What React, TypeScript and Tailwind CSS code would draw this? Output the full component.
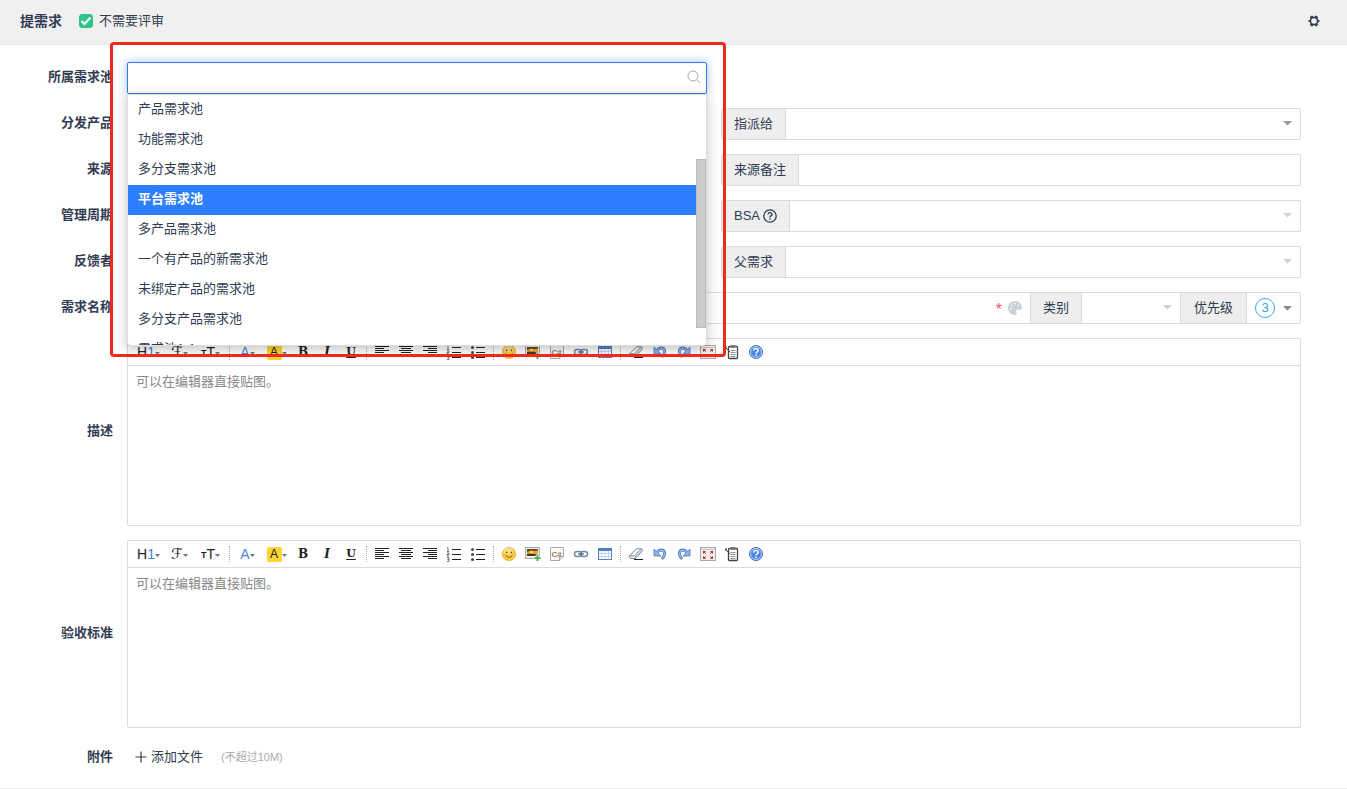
import { useState, type ReactNode } from 'react'
import { FaPalette } from 'react-icons/fa6'

const pools = [
  '产品需求池',
  '功能需求池',
  '多分支需求池',
  '平台需求池',
  '多产品需求池',
  '一个有产品的新需求池',
  '未绑定产品的需求池',
  '多分支产品需求池',
  '需求池1-1',
]

function Caret({ className }: { className: string }) {
  return (
    <svg className={className} width="9" height="5" viewBox="0 0 9 5" aria-hidden="true">
      <path d="M0 0h9L4.500 4.600z" fill="currentColor" />
    </svg>
  )
}

function SelectBox({ id, label, tone = 'light' }: { id: string; label: string; tone?: 'light' | 'dark' }) {
  return (
    <div className="relative h-full min-w-0 flex-1">
      <select id={id} aria-label={label} className="h-full w-full appearance-none bg-transparent px-2 outline-none">
        <option value=""></option>
      </select>
      <Caret
        className={
          tone === 'dark'
            ? 'pointer-events-none absolute top-3 right-2 text-[#999]'
            : 'pointer-events-none absolute top-3 right-2 text-[#cbd0db]'
        }
      />
    </div>
  )
}

function Addon({ htmlFor, children }: { htmlFor: string; children: ReactNode }) {
  return (
    <label htmlFor={htmlFor} className="flex h-full shrink-0 items-center border-r border-[#dcdcdc] bg-[#eee] px-3">
      {children}
    </label>
  )
}

function Box({ children }: { children: ReactNode }) {
  return <div className="flex h-8 min-w-0 items-center rounded-xs border border-[#dcdcdc] bg-white">{children}</div>
}

function Row({ label, htmlFor, children }: { label: string; htmlFor: string; children: ReactNode }) {
  return (
    <div className="flex items-center">
      <label htmlFor={htmlFor} className="w-[127px] shrink-0 pr-3.5 pb-0.5 text-right font-bold">
        {label}
      </label>
      <div className="min-w-0 flex-1">{children}</div>
    </div>
  )
}

function Pair({ children }: { children: ReactNode }) {
  return <div className="grid grid-cols-2 gap-3.5">{children}</div>
}

function Tool({ label, children }: { label: string; children: ReactNode }) {
  return (
    <button type="button" aria-label={label} title={label} className="flex h-6 w-6 items-center justify-center">
      {children}
    </button>
  )
}

function MenuTool({ label, narrow = false, children }: { label: string; narrow?: boolean; children: ReactNode }) {
  return (
    <button
      type="button"
      aria-label={label}
      title={label}
      className={narrow ? 'flex h-6 w-[29px] items-center justify-center' : 'flex h-6 w-[31px] items-center justify-center'}
    >
      {children}
      <svg width="5" height="3" viewBox="0 0 5 3" className="mt-0.5 text-[#777]" aria-hidden="true">
        <path d="M0 0h5L2.500 3z" fill="currentColor" />
      </svg>
    </button>
  )
}

function Divider() {
  return (
    <span className="flex w-[7px] justify-center">
      <span className="h-4 border-l border-dotted border-[#aaa]" />
    </span>
  )
}

function Lines({ rows }: { rows: [number, number][] }) {
  return (
    <svg width="16" height="16" viewBox="0 0 16 16" aria-hidden="true">
      {rows.map(([x, w], i) => (
        <rect key={i} x={x} y={2 + i * 2} width={w} height="1" fill="#222" />
      ))}
    </svg>
  )
}

function Undo({ flip = false }: { flip?: boolean }) {
  return (
    <svg width="16" height="16" viewBox="0 0 16 16" className={flip ? '-scale-x-100' : ''} aria-hidden="true">
      <path d="M4.500 7.500C7 2.500 12.600 3 12.600 7.500c0 2.500-1.300 4-2.800 5.300" fill="none" stroke="#4f78bb" strokeWidth="3" />
      <path d="M2 3v7h7z" fill="#8fb3ea" stroke="#4f78bb" strokeWidth=".8" strokeLinejoin="round" />
      <path d="M4.500 7.800C7 2.800 12.500 3.400 12.500 7.500c0 2.300-1.200 3.700-2.500 5" fill="none" stroke="#8fb3ea" strokeWidth="1.700" />
    </svg>
  )
}

function Toolbar() {
  return (
    <div className="flex h-[27px] items-center border-b border-[#dcdcdc] pl-[5px] text-[#222]">
      <MenuTool label="标题">
        <span className="text-[14px] leading-4">
          H<span className="text-[#3f7de0]">1</span>
        </span>
      </MenuTool>
      <MenuTool label="字体">
        <span className="font-['DejaVu_Serif','DejaVu_Sans',serif] text-[15px] leading-4">ℱ</span>
      </MenuTool>
      <MenuTool label="字号">
        <span className="pt-0.5 text-[9px] leading-4 font-bold">T</span>
        <span className="text-[14px] leading-4">T</span>
      </MenuTool>
      <Divider />
      <MenuTool label="文字颜色" narrow>
        <span className="text-[14px] leading-4 text-[#4f86e0]">A</span>
      </MenuTool>
      <MenuTool label="文字背景" narrow>
        <span className="h-[15px] w-[15px] rounded-xs bg-[#ffd434] text-center text-[12px] leading-[15px]">A</span>
      </MenuTool>
      <Tool label="粗体">
        <span className="font-['DejaVu_Serif',serif] text-[12px] leading-4 font-bold">B</span>
      </Tool>
      <Tool label="斜体">
        <span className="font-['DejaVu_Serif',serif] text-[12px] leading-4 font-bold italic">I</span>
      </Tool>
      <Tool label="下划线">
        <span className="font-['DejaVu_Serif',serif] text-[11px] leading-4 font-bold underline underline-offset-2">U</span>
      </Tool>
      <Divider />
      <Tool label="左对齐">
        <Lines rows={[[1, 14], [1, 9], [1, 14], [1, 9], [1, 14], [1, 9]]} />
      </Tool>
      <Tool label="居中">
        <Lines rows={[[1, 14], [3, 10], [1, 14], [3, 10], [1, 14], [3, 10]]} />
      </Tool>
      <Tool label="右对齐">
        <Lines rows={[[1, 14], [6, 9], [1, 14], [6, 9], [1, 14], [6, 9]]} />
      </Tool>
      <Tool label="编号">
        <svg width="16" height="16" viewBox="0 0 16 16" aria-hidden="true">
          <path d="M6 3.500h9M6 8.500h9M6 13.500h9" stroke="#222" />
          <path d="M1 2l1-.5v4M1 5.500h2M1 7h2v1.500H1V10h2M1 11.500h2v4H1M1.500 13.500H3" fill="none" stroke="#555" strokeWidth=".8" />
        </svg>
      </Tool>
      <Tool label="项目符号">
        <svg width="16" height="16" viewBox="0 0 16 16" aria-hidden="true">
          <path d="M6 3.500h9M6 8.500h9M6 13.500h9" stroke="#222" />
          <circle cx="2.500" cy="3.500" r="1.500" fill="#444" />
          <circle cx="2.500" cy="8.500" r="1.500" fill="#444" />
          <circle cx="2.500" cy="13.500" r="1.500" fill="#444" />
        </svg>
      </Tool>
      <Divider />
      <Tool label="表情">
        <svg width="16" height="16" viewBox="0 0 16 16" aria-hidden="true">
          <circle cx="8" cy="8" r="6.600" fill="#fbcb3f" stroke="#e3a92c" strokeWidth=".8" />
          <ellipse cx="7.500" cy="5" rx="4.500" ry="3" fill="#fff" opacity=".4" />
          <circle cx="5.700" cy="6.400" r=".8" fill="#6a4a12" />
          <circle cx="10.300" cy="6.400" r=".8" fill="#6a4a12" />
          <path d="M4.500 9.400q3.500 3.800 7 0" fill="none" stroke="#7c5517" strokeWidth=".9" />
        </svg>
      </Tool>
      <Tool label="图片">
        <svg width="16" height="16" viewBox="0 0 16 16" aria-hidden="true">
          <rect x=".5" y="1.500" width="14" height="11" fill="#eee" stroke="#aaa" />
          <rect x="2" y="3" width="11" height="7" fill="#f0a22b" />
          <path d="M2 3h11v1.500L9 5 6 4.500 2 6z" fill="#604a22" />
          <path d="M2 8l4-.5 7 1V10H2z" fill="#4a3619" />
          <circle cx="6.500" cy="6.300" r="1.200" fill="#ffe87a" />
          <path d="M12.500 8.500v7M9 12h7" stroke="#fff" strokeWidth="3.500" />
          <path d="M12.500 9v6M9.500 12h6" stroke="#4cae4c" strokeWidth="2" />
        </svg>
      </Tool>
      <Tool label="代码">
        <svg width="16" height="16" viewBox="0 0 16 16" aria-hidden="true">
          <path d="M1.500 1.500h13v9l-4 4h-9z" fill="#fafafa" stroke="#aaa" />
          <path d="M14.500 10.500h-4v4" fill="#ddd" stroke="#aaa" />
          <text x="2.500" y="10.500" fontSize="8" fontWeight="bold" fill="#9a754d">C#</text>
        </svg>
      </Tool>
      <Tool label="链接">
        <svg width="16" height="16" viewBox="0 0 16 16" aria-hidden="true">
          <rect x="1.500" y="5.500" width="7" height="5" rx="2.500" fill="none" stroke="#7489ac" strokeWidth="1.500" />
          <rect x="7.500" y="5.500" width="7" height="5" rx="2.500" fill="none" stroke="#7489ac" strokeWidth="1.500" />
          <path d="M5 8h6" stroke="#4c6591" strokeWidth="1.300" />
        </svg>
      </Tool>
      <Tool label="表格">
        <svg width="16" height="16" viewBox="0 0 16 16" aria-hidden="true">
          <rect x="1.500" y="2.500" width="13" height="11" fill="#fff" stroke="#5779b5" />
          <path d="M1 2h14v3H1z" fill="#527ec7" />
          <path d="M4.500 5v8.500M8 5v8.500M11.500 5v8.500M2 7.500h12.500M2 10.500h12.500" stroke="#b7cae8" strokeWidth=".8" />
        </svg>
      </Tool>
      <Divider />
      <Tool label="清除格式">
        <svg width="16" height="16" viewBox="0 0 16 16" aria-hidden="true">
          <path d="M1.500 9.800L8.500 2.800h4.600q1.400.2 1.200 2L7.500 12.500h-4.500q-2-.6-1.500-2.700z" fill="#f7f9fc" stroke="#6b7685" strokeWidth=".9" strokeLinejoin="round" />
          <path d="M1.500 9.800h4.700q1.500.7 1.300 2.700l6.800-7.700q0-1.800-1.200-2L6.200 9.800z" fill="#c9d3df" stroke="#8793a3" strokeWidth=".7" strokeLinejoin="round" />
          <path d="M6 13.500h9" stroke="#222" strokeWidth="1" />
        </svg>
      </Tool>
      <Tool label="撤销">
        <Undo />
      </Tool>
      <Tool label="重做">
        <Undo flip />
      </Tool>
      <Tool label="全屏">
        <svg width="16" height="16" viewBox="0 0 16 16" aria-hidden="true">
          <rect x=".5" y="1.500" width="15" height="13" fill="#f3eeee" stroke="#b3a6a6" />
          <path d="M1 3.500h14" stroke="#ccc4c4" />
          <path d="M3 5h3L3 8zM13 5h-3l3 3zM3 13h3l-3-3zM13 13h-3l3-3z" fill="#b9313a" />
          <path d="M4 6l2 1.500M12 6l-2 1.500M4 12l2-1.500M12 12l-2-1.500" stroke="#b9313a" />
        </svg>
      </Tool>
      <Tool label="粘贴">
        <svg width="16" height="16" viewBox="0 0 16 16" aria-hidden="true">
          <rect x="4.500" y="2.500" width="9" height="12" rx="1" fill="#fff" stroke="#444" strokeWidth="1.300" />
          <rect x="6.500" y="1" width="5" height="3" rx="1" fill="#777" />
          <path d="M6.500 6.500h5M6.500 8.500h5M6.500 10.500h5M6.500 12.500h5" stroke="#777" strokeWidth=".8" />
          <path d="M1 3l5 5M2 2v3" stroke="#444" />
        </svg>
      </Tool>
      <Tool label="帮助">
        <svg width="16" height="16" viewBox="0 0 16 16" aria-hidden="true">
          <circle cx="8" cy="8" r="6.500" fill="#4d86e8" stroke="#4570bc" />
          <circle cx="8" cy="8" r="5.500" fill="none" stroke="#d9e6fb" strokeWidth=".8" />
          <path d="M5.800 6.500q.2-2 2.200-2t2.200 1.800q0 1-1.200 1.700-.9.600-.9 1.400" fill="none" stroke="#fff" strokeWidth="1.500" />
          <rect x="7.300" y="10.500" width="1.500" height="1.500" fill="#fff" />
        </svg>
      </Tool>
    </div>
  )
}

function Editor({ id }: { id: string }) {
  return (
    <div className="rounded-xs border border-[#dcdcdc] bg-white">
      <Toolbar />
      <textarea
        id={id}
        placeholder="可以在编辑器直接贴图。"
        className="block h-[159px] w-full resize-none bg-transparent px-2 py-1.5 leading-5 outline-none placeholder:text-[#888]"
      />
    </div>
  )
}

function PoolPicker() {
  const [query, setQuery] = useState('')
  const [selected, setSelected] = useState('平台需求池')
  return (
    <div className="relative">
      <input
        id="pool"
        value={query}
        onChange={(e) => setQuery(e.target.value)}
        className="block h-8 w-full rounded-xs border border-[#3c78d8] bg-white pr-8 pl-2 shadow-[0_0_8px_rgba(46,127,255,0.5)] outline-none"
      />
      <svg className="pointer-events-none absolute top-2 right-1.5 text-[#aaa]" width="14" height="14" viewBox="0 0 14 14" aria-hidden="true">
        <circle cx="6" cy="6" r="5" fill="none" stroke="currentColor" />
        <path d="M9.800 9.800L13 13" stroke="currentColor" />
      </svg>
      <div className="absolute top-8 left-0 z-10 flex h-[252px] w-full overflow-hidden rounded-b-sm border border-[#ddd] bg-white shadow-[0_3px_12px_rgba(0,0,0,0.25)]">
        <ul role="listbox" aria-label="所属需求池" className="min-w-0 flex-1 overflow-hidden">
          {pools.map((pool) => (
            <li
              key={pool}
              role="option"
              aria-selected={pool === selected}
              onClick={() => setSelected(pool)}
              className={
                pool === selected
                  ? 'h-[30px] cursor-pointer bg-[#2e7fff] px-2.5 leading-7 font-bold text-white'
                  : 'h-[30px] cursor-pointer px-2.5 leading-7'
              }
            >
              {pool}
            </li>
          ))}
        </ul>
        <div className="w-2.5 shrink-0 pt-16">
          <div className="h-[169px] border border-[#bbb] bg-[#ccc]" />
        </div>
      </div>
      <div className="pointer-events-none absolute -top-5 -right-[19px] -left-[17px] z-20 h-[315px] rounded-sm border-3 border-[#ee2a20]" />
    </div>
  )
}

export default function App() {
  const [skipReview, setSkipReview] = useState(true)
  return (
    <div className="min-h-screen bg-white font-['Liberation_Sans','Noto_Sans_CJK_SC',sans-serif] text-[13px] leading-5 text-[#313c52]">
      <header className="flex h-[45px] items-center border-b border-[#e8e8e8] bg-[#f0f0f0] pr-[27px] pb-0.5 pl-5">
        <h1 className="text-[14px] font-bold">提需求</h1>
        <label className="ml-[17px] flex items-center gap-1.5">
          <span className="grid h-3.5 w-3.5">
            <input
              type="checkbox"
              checked={skipReview}
              onChange={(e) => setSkipReview(e.target.checked)}
              className="col-start-1 row-start-1 h-3.5 w-3.5 appearance-none rounded-[3px] border border-[#aaa] checked:border-[#2cc48a] checked:bg-[#2cc48a]"
            />
            <svg className="pointer-events-none col-start-1 row-start-1" width="14" height="14" viewBox="0 0 14 14" aria-hidden="true">
              {skipReview && <path d="M2.500 7l3 3 6-6.500" fill="none" stroke="#fff" strokeWidth="2.200" />}
            </svg>
          </span>
          不需要评审
        </label>
        <button type="button" aria-label="设置" className="ml-auto">
          <svg width="12" height="12" viewBox="0 0 12 12" aria-hidden="true">
            <path
              d="M3 .8h1.800l.6.900h1.200l.6-.9H9l1 1.700-.4 1 .7 1.500 1.300.3v1.400l-1.300.3-.7 1.500.4 1-1 1.700H7.200l-.6-.9H5.400l-.6.900H3L2 9.500l.4-1L1.700 7 .4 6.700V5.300L1.700 5l.7-1.500-.4-1zM6 3.200a2.800 2.800 0 1 0 0 5.600 2.800 2.800 0 0 0 0-5.600z"
              fill="#313c52"
              fillRule="evenodd"
            />
          </svg>
        </button>
      </header>

      <form className="border-b border-[#eee] pt-[17px] pr-[46px] pb-3.5" onSubmit={(e) => e.preventDefault()}>
        <div className="flex flex-col gap-3.5">
          <Row label="所属需求池" htmlFor="pool">
            <Pair>
              <PoolPicker />
            </Pair>
          </Row>
          <Row label="分发产品" htmlFor="product">
            <Pair>
              <Box><SelectBox id="product" label="分发产品" /></Box>
              <Box>
                <Addon htmlFor="assign">指派给</Addon>
                <SelectBox id="assign" label="指派给" tone="dark" />
              </Box>
            </Pair>
          </Row>
          <Row label="来源" htmlFor="source">
            <Pair>
              <Box><SelectBox id="source" label="来源" /></Box>
              <Box>
                <Addon htmlFor="note">来源备注</Addon>
                <input id="note" className="h-full min-w-0 flex-1 px-2 outline-none" />
              </Box>
            </Pair>
          </Row>
          <Row label="管理周期" htmlFor="cycle">
            <Pair>
              <Box><SelectBox id="cycle" label="管理周期" /></Box>
              <Box>
                <Addon htmlFor="bsa">
                  BSA
                  <svg className="ml-[3px]" width="14" height="14" viewBox="0 0 14 14" aria-hidden="true">
                    <circle cx="7" cy="7" r="6.200" fill="none" stroke="#313c52" strokeWidth="1.300" />
                    <path d="M5 5.500Q5.100 3.700 7 3.700T9 5.400Q9 6.300 7.900 6.900 7 7.400 7 8.400" fill="none" stroke="#313c52" strokeWidth="1.300" />
                    <rect x="6.300" y="9.400" width="1.400" height="1.300" fill="#313c52" />
                  </svg>
                </Addon>
                <SelectBox id="bsa" label="BSA" />
              </Box>
            </Pair>
          </Row>
          <Row label="反馈者" htmlFor="feedback">
            <Pair>
              <Box><input id="feedback" className="h-full min-w-0 flex-1 px-2 outline-none" /></Box>
              <Box>
                <Addon htmlFor="parent">父需求</Addon>
                <SelectBox id="parent" label="父需求" />
              </Box>
            </Pair>
          </Row>
          <Row label="需求名称" htmlFor="name">
            <Box>
              <input id="name" required className="h-full min-w-0 flex-1 px-2 outline-none" />
              <span className="mr-1.5 pt-1 text-[16px] text-[#f05a5a]">*</span>
              <button type="button" aria-label="颜色" className="mr-2 text-[#cbd0db]">
                <FaPalette size={14} />
              </button>
              <div className="flex h-full border-l border-[#dcdcdc]">
                <Addon htmlFor="category">类别</Addon>
                <div className="h-full w-[98px]">
                  <SelectBox id="category" label="类别" />
                </div>
              </div>
              <div className="flex h-full border-l border-[#dcdcdc]">
                <Addon htmlFor="priority">
                  <span className="px-px">优先级</span>
                </Addon>
                <button id="priority" type="button" className="flex h-full w-[53px] items-center gap-2 pl-2">
                  <span className="flex h-5 w-5 items-center justify-center rounded-full border border-[#35a7e0] text-[#35a7e0]">3</span>
                  <Caret className="text-[#888]" />
                </button>
              </div>
            </Box>
          </Row>
          <Row label="描述" htmlFor="desc">
            <Editor id="desc" />
          </Row>
          <Row label="验收标准" htmlFor="verify">
            <Editor id="verify" />
          </Row>
          <Row label="附件" htmlFor="files">
            <div className="flex h-8 items-center pb-0.5 pl-2">
              <button id="files" type="button" className="flex items-center gap-1">
                <svg width="12" height="12" viewBox="0 0 12 12" aria-hidden="true">
                  <path d="M6 .5v11M.5 6h11" stroke="#313c52" strokeWidth="1.200" />
                </svg>
                添加文件
              </button>
              <span className="ml-[18px] text-[11px] text-[#aaa]">(不超过10M)</span>
            </div>
          </Row>
        </div>
      </form>
    </div>
  )
}
